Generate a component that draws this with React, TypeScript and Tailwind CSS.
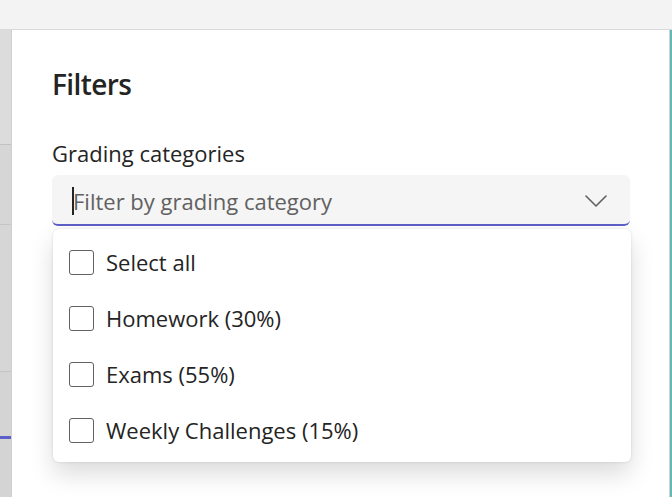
/* Filters dialog — grading category dropdown opened. */
const categories = ['Select all', 'Homework (30%)', 'Exams (55%)', 'Weekly Challenges (15%)'];

function Checkbox() {
  return <span className="w-[25px] h-[25px] shrink-0 rounded-[3px] border border-[#616161] bg-white" />;
}

function Chevron() {
  return (
    <svg width="22" height="12" viewBox="0 0 22 12" fill="none" className="shrink-0">
      <path d="M1 1l10 10L21 1" stroke="#616161" strokeWidth="1.6" strokeLinecap="round" strokeLinejoin="round" />
    </svg>
  );
}

function SideStrip() {
  return (
    <div className="w-[11px] shrink-0 flex flex-col bg-[#d5d5d5]">
      <div className="h-[115px] bg-[#dcdcdc] border-b border-[#c2c2c2]" />
      <div className="h-[80px] bg-[#d6d6d6] border-b border-[#c6c6c6]" />
      <div className="h-[147px] bg-[#d6d6d6] border-b border-[#c4c4c4]" />
      <div className="h-[64px] bg-[#d4d4d4]" />
      <div className="h-[3px] bg-[#5b5fc7]" />
      <div className="grow bg-[#d4d4d4]" />
    </div>
  );
}

export default function App() {
  return (
    <div
      className="w-[672px] h-[497px] overflow-hidden flex flex-col bg-[#f3f3f3]"
      style={{ fontFamily: '"Open Sans", "Noto Sans", sans-serif' }}
    >
      <div className="h-[30px] shrink-0 border-b border-[#d9d9d9]" />
      <div className="grow flex min-h-0">
        <SideStrip />
        <div className="grow bg-white border-l border-r border-[#d0d0d0] pl-[40px] pt-[34px]">
          <h1 className="text-[28px] leading-[40px] font-semibold text-[#242424] tracking-[-0.6px]">Filters</h1>
          <label className="block mt-[35px] text-[22px] leading-[28px] text-[#242424]">
            Grading categories
          </label>
          <div className="mt-[8px] w-[578px] h-[51px] rounded-[6px] bg-[#f5f5f5] border-b-2 border-[#5b5fc7] flex items-center pl-[20px] pr-[23px] pt-[3px]">
            <span className="w-[2px] h-[28px] bg-[#242424]" />
            <span className="grow -ml-[1px] text-[22px] text-[#616161]">Filter by grading category</span>
            <Chevron />
          </div>
          <div className="mt-[3px] ml-[1px] w-[578px] rounded-[6px] bg-white pt-[5px] pb-[4px] shadow-[0_0_3px_rgba(0,0,0,0.12),0_12px_24px_rgba(0,0,0,0.14)]">
            {categories.map((c) => (
              <div key={c} className="h-[56px] flex items-center gap-[12px] pl-[16px]">
                <Checkbox />
                <span className="text-[22px] text-[#242424]">{c}</span>
              </div>
            ))}
          </div>
        </div>
        <div className="w-[2px] shrink-0 bg-[#62b7b7]" />
      </div>
    </div>
  );
}
